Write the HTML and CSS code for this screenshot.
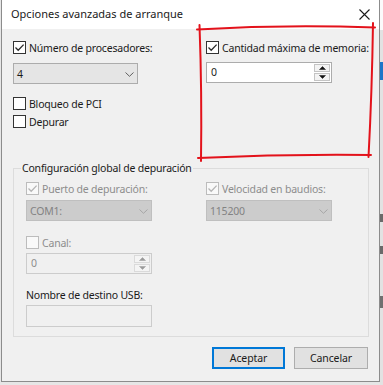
FILE: index.html
```html
<!DOCTYPE html>
<html lang="es">
<head>
<meta charset="utf-8">
<title>Opciones avanzadas de arranque</title>
<link rel="stylesheet" href="styles.css">
</head>
<body>
<div class="screen">
  <div class="dialog">
    <div class="titlebar">
      <span class="title">Opciones avanzadas de arranque</span>
      <svg class="close" width="11" height="11" viewBox="0 0 11 11"><path d="M0.5 0.5L10.5 10.5M10.5 0.5L0.5 10.5" stroke="#1a1a1a" stroke-width="1.1" fill="none"/></svg>
    </div>
    <div class="body">
      <div class="top">
        <div class="col">
          <div class="check"><span class="box"><svg width="11" height="11" viewBox="0 0 11 11"><path d="M1.5 5.5L4.2 8.2L9.6 2.6" class="tick"/></svg></span><span>Número de procesadores:</span></div>
          <div class="combo combo-top"><span>4</span><svg class="chev" width="9" height="5" viewBox="0 0 9 5"><path d="M0.5 0.5L4.5 4.3L8.5 0.5"/></svg></div>
          <div class="check check-pci"><span class="box"></span><span>Bloqueo de PCI</span></div>
          <div class="check check-dep"><span class="box"></span><span>Depurar</span></div>
        </div>
        <div class="col">
          <div class="check"><span class="box"><svg width="11" height="11" viewBox="0 0 11 11"><path d="M1.5 5.5L4.2 8.2L9.6 2.6" class="tick"/></svg></span><span>Cantidad máxima de memoria:</span></div>
          <div class="spin spin-top">
            <span class="spin-value">0</span>
            <div class="spin-btns">
              <span class="spin-btn"><svg width="7" height="4" viewBox="0 0 7 4"><path d="M0.5 3.5L3.5 0.5L6.5 3.5Z"/></svg></span>
              <span class="spin-btn"><svg width="7" height="4" viewBox="0 0 7 4"><path d="M0.5 0.5L3.5 3.5L6.5 0.5Z"/></svg></span>
            </div>
          </div>
        </div>
      </div>

      <fieldset class="group">
        <legend>Configuración global de depuración</legend>
        <div class="group-grid">
          <div class="col">
            <div class="check disabled"><span class="box"><svg width="11" height="11" viewBox="0 0 11 11"><path d="M1.5 5.5L4.2 8.2L9.6 2.6" class="tick"/></svg></span><span>Puerto de depuración:</span></div>
            <div class="combo combo-dis"><span>COM1:</span><svg class="chev" width="9" height="5" viewBox="0 0 9 5"><path d="M0.5 0.5L4.5 4.3L8.5 0.5"/></svg></div>
            <div class="check disabled check-canal"><span class="box"></span><span>Canal:</span></div>
            <div class="spin spin-dis">
              <span class="spin-value">0</span>
              <div class="spin-btns">
                <span class="spin-btn"><svg width="7" height="4" viewBox="0 0 7 4"><path d="M0.5 3.5L3.5 0.5L6.5 3.5Z"/></svg></span>
                <span class="spin-btn"><svg width="7" height="4" viewBox="0 0 7 4"><path d="M0.5 0.5L3.5 3.5L6.5 0.5Z"/></svg></span>
              </div>
            </div>
            <div class="field-label">Nombre de destino USB:</div>
            <div class="textbox"></div>
          </div>
          <div class="col">
            <div class="check disabled"><span class="box"><svg width="11" height="11" viewBox="0 0 11 11"><path d="M1.5 5.5L4.2 8.2L9.6 2.6" class="tick"/></svg></span><span>Velocidad en baudios:</span></div>
            <div class="combo combo-dis"><span>115200</span><svg class="chev" width="9" height="5" viewBox="0 0 9 5"><path d="M0.5 0.5L4.5 4.3L8.5 0.5"/></svg></div>
          </div>
        </div>
      </fieldset>

      <div class="buttons">
        <button class="btn btn-default">Aceptar</button>
        <button class="btn btn-cancel">Cancelar</button>
      </div>
    </div>
  </div>
  <div class="edge"></div>

  <svg class="annotation" width="383" height="385" viewBox="0 0 383 385">
    <path d="M197 29.5 Q 286 24 375 27.5"/>
    <path d="M373 23 Q 372 92 368.5 157"/>
    <path d="M198 158 Q 285 154 371 155"/>
    <path d="M199.5 25 Q 202 92 201 161"/>
  </svg>
</div>
</body>
</html>
```

FILE: styles.css
```css
* {
  box-sizing: border-box;
}

html,
body {
  margin: 0;
  padding: 0;
}

body {
  width: 383px;
  height: 385px;
  overflow: hidden;
  font-family: "Noto Sans", "Open Sans", sans-serif;
  font-size: 10.5px;
  letter-spacing: -0.2px;
  color: #1a1a1a;
  background: #e8e8e8;
}

.screen {
  position: relative;
  display: flex;
  width: 383px;
  height: 385px;
  padding-left: 1px;
  background: #e6e6e6;
}

.dialog {
  flex: none;
  width: 379px;
  height: 382px;
  display: flex;
  flex-direction: column;
  border: 1px solid #8c8c8c;
  border-top: none;
  background: #f0f0f0;
}

.titlebar {
  flex: none;
  height: 29px;
  display: flex;
  align-items: center;
  padding-left: 9px;
  background: #ffffff;
}

.title {
  line-height: 16px;
  padding-bottom: 1px;
  font-size: 11px;
  letter-spacing: 0;
}

.close {
  margin-left: auto;
  margin-right: 9px;
}

.body {
  flex: 1;
  display: flex;
  flex-direction: column;
  padding: 12px 10px 0 11px;
}

.top {
  display: grid;
  grid-template-columns: 193px 1fr;
}

.col {
  display: flex;
  flex-direction: column;
  align-items: flex-start;
}

.check {
  display: flex;
  align-items: center;
  gap: 3px;
  height: 14px;
  line-height: 14px;
  white-space: nowrap;
}

.box {
  flex: none;
  width: 13px;
  height: 13px;
  border: 1px solid #333333;
  background: #ffffff;
  display: flex;
  align-items: center;
  justify-content: center;
  margin-top: -1px;
}

.box svg {
  display: block;
}

.tick {
  fill: none;
  stroke: #2b2b2b;
  stroke-width: 1.3;
}

.check.disabled {
  color: #8d8d8d;
}

.check.disabled .box {
  border-color: #bcbcbc;
  background: #f9f9f9;
}

.check.disabled .tick {
  stroke: #b5b5b5;
}

.combo {
  width: 126px;
  height: 21px;
  display: flex;
  align-items: center;
  justify-content: space-between;
  padding: 0 3px 0 3px;
  border: 1px solid #acacac;
  background: #e5e5e5;
  line-height: 14px;
}

.chev {
  display: block;
  margin-top: 1px;
}

.chev path {
  fill: none;
  stroke: #606060;
  stroke-width: 1;
}

.combo-top {
  width: 125px;
  margin-top: 8px;
}

.check-pci {
  margin-top: 13px;
}

.check-dep {
  margin-top: 4px;
}

.spin {
  width: 126px;
  height: 21px;
  display: flex;
  align-items: stretch;
  border: 1px solid #acacac;
  background: #ffffff;
}

.spin-value {
  flex: 1;
  padding-left: 4px;
  line-height: 19px;
}

.spin-btns {
  flex: none;
  width: 17px;
  display: flex;
  flex-direction: column;
  gap: 1px;
  padding: 1px 1px 1px 0;
}

.spin-btn {
  flex: 1;
  display: flex;
  align-items: center;
  justify-content: center;
  border: 1px solid #c4c4c4;
  background: #f3f3f3;
}

.spin-btn svg {
  display: block;
}

.spin-btn path {
  fill: #111111;
  stroke: #111111;
  stroke-width: 0.5;
}

.spin-top {
  margin-top: 7px;
}

.group {
  margin: 32px 0 0 0;
  padding: 7px 0 9px 12px;
  border: 1px solid #dcdcdc;
  min-width: 0;
}

.group legend {
  padding: 0 1px;
  margin-left: -5px;
  line-height: 14px;
}

.group-grid {
  display: grid;
  grid-template-columns: 180px 1fr;
}

.combo-dis {
  margin-top: 4px;
  background: #cccccc;
  border-color: #bfbfbf;
  color: #838383;
}

.combo-dis .chev path {
  stroke: #a6a6a6;
}

.check-canal {
  margin-top: 15px;
}

.spin-dis {
  margin-top: 3px;
  background: #f0f0f0;
  border-color: #cccccc;
  color: #8d8d8d;
}

.spin-dis .spin-btn {
  border-color: #dadada;
  background: #f4f4f4;
}

.spin-dis .spin-btn path {
  fill: #9a9a9a;
  stroke: #9a9a9a;
}

.field-label {
  margin-top: 14px;
  line-height: 14px;
}

.textbox {
  margin-top: 3px;
  width: 126px;
  height: 22px;
  border: 1px solid #cccccc;
  background: #f0f0f0;
}

.buttons {
  display: flex;
  justify-content: flex-end;
  gap: 9px;
  margin-top: 10px;
  margin-right: 1px;
}

.btn {
  height: 22px;
  padding: 0;
  font-family: inherit;
  font-size: 10.5px;
  letter-spacing: -0.1px;
  color: #1a1a1a;
  background: #e1e1e1;
  border: 1px solid #adadad;
  border-radius: 0;
  line-height: 14px;
}

.btn-default {
  width: 73px;
  border-color: #0078d7;
  box-shadow: inset 0 0 0 1px #0078d7;
}

.btn-cancel {
  width: 74px;
}

.edge {
  flex: 1;
  background: linear-gradient(to bottom,
    #fbfbfb 0 30px,
    #e2e2e2 30px 62px,
    #1c76c9 62px 80px,
    #e2e2e2 80px 214px,
    #6a6a6a 214px 222px,
    #e2e2e2 222px 246px,
    #6a6a6a 246px 254px,
    #e2e2e2 254px 296px,
    #707070 296px 308px,
    #e2e2e2 308px);
}

.annotation {
  position: absolute;
  left: 0;
  top: 0;
  pointer-events: none;
}

.annotation path {
  fill: none;
  stroke: #e3121b;
  stroke-width: 2;
  stroke-linecap: round;
}
```
